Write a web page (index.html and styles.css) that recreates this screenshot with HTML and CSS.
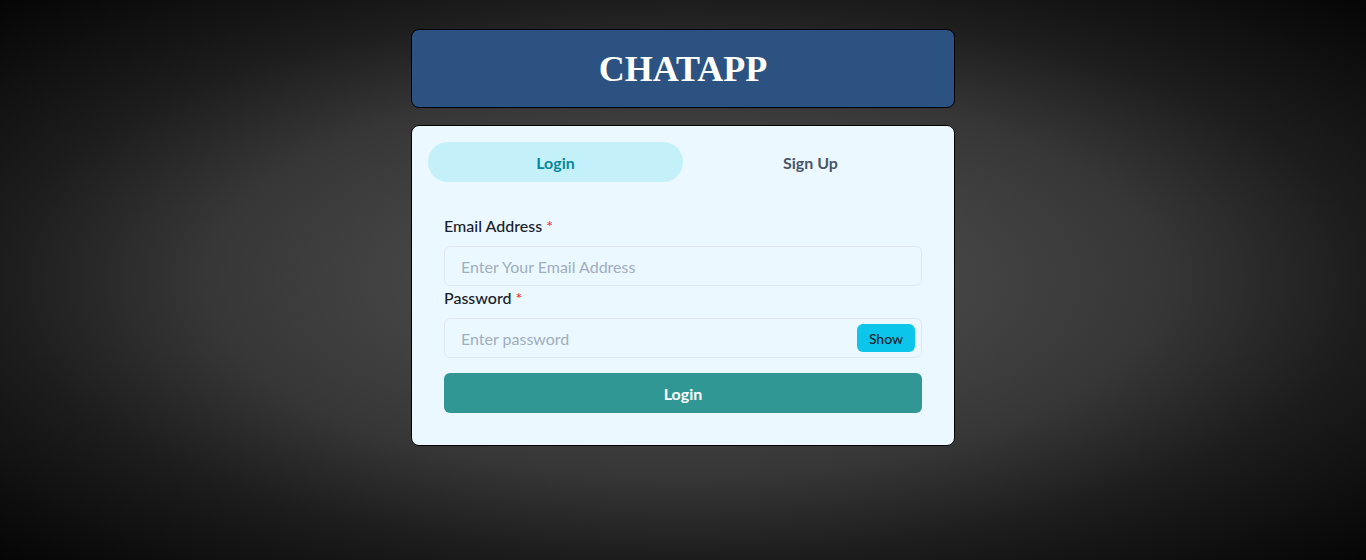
FILE: index.html
```html
<!DOCTYPE html>
<html lang="en">
<head>
<meta charset="utf-8">
<title>ChatApp</title>
<link rel="stylesheet" href="styles.css">
</head>
<body>
<div class="container">
  <header class="brand">
    <h1 class="brand-title">CHATAPP</h1>
  </header>
  <section class="card">
    <div class="tabs">
      <button class="tab tab-active" type="button">Login</button>
      <button class="tab" type="button">Sign Up</button>
    </div>
    <form class="panel">
      <div class="field">
        <label class="label">Email Address<span class="req">*</span></label>
        <div class="input-group">
          <input class="input" type="email" placeholder="Enter Your Email Address">
        </div>
      </div>
      <div class="field">
        <label class="label">Password<span class="req">*</span></label>
        <div class="input-group">
          <input class="input input-pw" type="password" placeholder="Enter password">
          <div class="right-el">
            <button class="show-btn" type="button">Show</button>
          </div>
        </div>
      </div>
      <button class="submit" type="button">Login</button>
    </form>
  </section>
</div>
</body>
</html>
```

FILE: styles.css
```css
* { box-sizing: border-box; }
html, body { height: 100%; }
body {
  margin: 0;
  font-family: Lato, "Noto Sans", sans-serif;
  background: radial-gradient(ellipse farthest-corner at 50% 50%, #4c4c4c 0%, #444444 28%, #363636 50%, #1c1c1c 71%, #050505 100%);
  min-height: 560px;
}
.container {
  width: 544px;
  margin: 0 auto;
  padding-top: 29px;
  display: flex;
  flex-direction: column;
}
.brand {
  height: 79px;
  background: #2c5282;
  border: 1px solid #000;
  border-radius: 8px;
  display: flex;
  align-items: center;
  justify-content: center;
}
.brand-title {
  margin: 0;
  font-family: "Liberation Serif", "Times New Roman", serif;
  font-weight: 700;
  font-size: 36px;
  line-height: 1;
  color: #fff;
  padding-top: 1px;
}
.card {
  margin-top: 17px;
  background: #ebf8ff;
  border: 1px solid #000;
  border-radius: 8px;
  padding: 16px;
}
.tabs {
  display: flex;
  margin-bottom: 16px;
}
.tab {
  flex: 1;
  height: 40px;
  border: 0;
  background: transparent;
  border-radius: 9999px;
  font-family: inherit;
  font-size: 16px;
  font-weight: 700;
  color: #4a5568;
  cursor: pointer;
}
.tab-active {
  background: #c4f1f9;
  color: #0987a0;
}
.panel {
  padding: 16px;
  display: flex;
  flex-direction: column;
}
.field { display: flex; flex-direction: column; }
.label {
  font-size: 16px;
  line-height: 24px;
  font-weight: 500;
  color: #1a202c;
  margin-bottom: 8px;
}
.req {
  color: #e53e3e;
  margin-left: 4px;
}
.input-group { position: relative; }
.input {
  width: 100%;
  height: 40px;
  border: 1px solid #e2e8f0;
  border-radius: 6px;
  background: transparent;
  padding: 0 16px;
  font-family: inherit;
  font-size: 16px;
  color: #1a202c;
  outline: none;
}
.input::placeholder { color: #a0aec0; }
.input-pw { padding-right: 72px; }
.right-el {
  position: absolute;
  top: 0;
  right: 0;
  width: 72px;
  height: 40px;
  display: flex;
  align-items: center;
  justify-content: center;
}
.show-btn {
  height: 28px;
  padding: 0 12px;
  border: 0;
  border-radius: 6px;
  background: #0bc5ea;
  color: #1a202c;
  font-family: inherit;
  font-size: 14px;
  font-weight: 500;
  cursor: pointer;
}
.submit {
  margin-top: 15px;
  height: 40px;
  border: 0;
  border-radius: 6px;
  background: #319795;
  color: #fff;
  font-family: inherit;
  font-size: 16px;
  font-weight: 700;
  cursor: pointer;
}
```
